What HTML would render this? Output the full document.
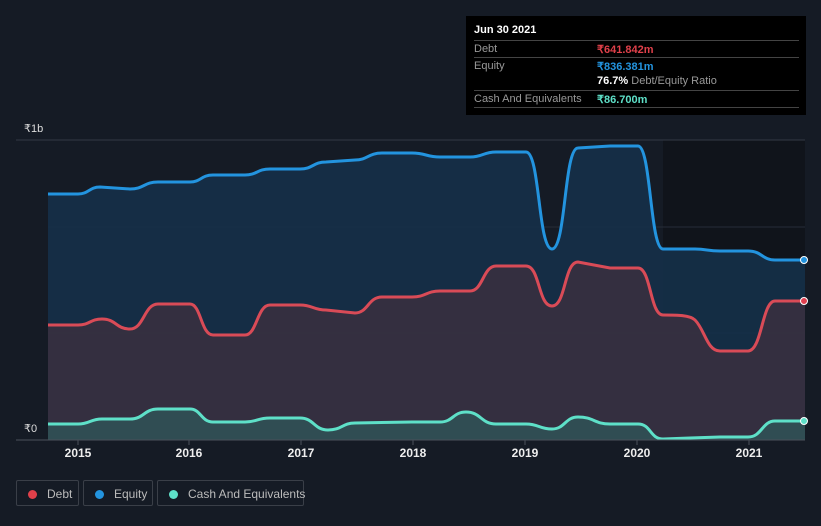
<!DOCTYPE html>
<html><head><style>
body{margin:0;width:821px;height:526px;background:#151b25;font-family:"Liberation Sans",sans-serif;overflow:hidden;position:relative}
.tt{position:absolute;left:466px;top:16px;width:340px;height:99px;background:#000;color:#fff;font-size:11px}
.tt .r{position:absolute;left:8px;right:7px;border-top:1px solid #444;height:16px}
.l{color:#999;position:absolute;left:0;top:2px}
.v{position:absolute;left:123px;top:2px;font-weight:bold}
.leg{position:absolute;top:480px;height:26px;border:1px solid #3a3f48;border-radius:2px;color:#bbb;font-size:12px;line-height:26px;box-sizing:border-box;white-space:nowrap}
.leg i{display:inline-block;width:9px;height:9px;border-radius:50%;margin:0 10px 0 11px;vertical-align:-1px}
.yr{position:absolute;top:446px;color:#eee;font-size:12px;font-weight:bold;width:40px;text-align:center}
</style></head><body>
<svg width="821" height="526" style="position:absolute;left:0;top:0">
<rect x="663" y="140" width="142" height="300" fill="#10141b"/>
<line x1="16" y1="140" x2="805" y2="140" stroke="#333a45"/>
<line x1="48" y1="227" x2="805" y2="227" stroke="#262d38"/>
<line x1="48" y1="333" x2="805" y2="333" stroke="#262d38"/>
<defs>
<path id="eq" d="M48,194 L78,194 C89,194 89,187 100,187 L130,189 C144,189 144,182 158,182 L190,182 C201,182 201,175 213,175 L245,175 C257,175 257,169 270,169 L300,169 C313,169 313,162 326,162 L355,160 C368,160 368,153 382,153 L412,153 C426,153 426,157 440,157 L470,157 C483,157 483,152 496,152 L526,152 C540,152 538,249 552,249 C566,249 564,148 578,148 L610,146 L638,146 C651,146 650,249 663,249 L695,249 C707,249 707,251 720,251 L748,251 C762,251 762,260 775,260 L805,260"/>
<path id="db" d="M48,325 L78,325 C90,325 90,319 102,319 C116,319 116,329 130,329 C144,329 144,304 158,304 L190,304 C201,304 201,335 213,335 L245,335 C257,335 257,305 270,305 L300,305 C313,305 313,310 326,310 L355,313 C368,313 368,297 382,297 L412,297 C426,297 426,291 440,291 L470,291 C483,291 483,266 496,266 L526,266 C540,266 538,306 552,306 C566,306 564,262 578,262 L610,268 L638,268 C651,268 650,315 663,315 C677,315 690,315 695,320 C705,330 707,351 720,351 L748,351 C762,351 762,301 775,301 L805,301"/>
<path id="cs" d="M48,424 L78,424 C90,424 90,419 102,419 L130,419 C144,419 144,409 158,409 L190,409 C201,409 201,422 213,422 L245,422 C257,422 257,418 270,418 L300,418 C314,418 314,430 328,430 C342,430 342,423 355,423 L412,422 L440,422 C453,422 453,412 466,412 C481,412 481,424 496,424 L526,424 C539,424 539,429 552,429 C565,429 565,417 578,417 C594,417 594,424 610,424 L638,424 C651,424 650,439 663,439 L690,438 L720,437 L748,437 C762,437 762,421 775,421 L805,421"/>
</defs>
<path d="M48,194 L78,194 C89,194 89,187 100,187 L130,189 C144,189 144,182 158,182 L190,182 C201,182 201,175 213,175 L245,175 C257,175 257,169 270,169 L300,169 C313,169 313,162 326,162 L355,160 C368,160 368,153 382,153 L412,153 C426,153 426,157 440,157 L470,157 C483,157 483,152 496,152 L526,152 C540,152 538,249 552,249 C566,249 564,148 578,148 L610,146 L638,146 C651,146 650,249 663,249 L695,249 C707,249 707,251 720,251 L748,251 C762,251 762,260 775,260 L805,260 L805,440 L48,440Z" fill="#153049" fill-opacity=".9"/>
<path d="M48,325 L78,325 C90,325 90,319 102,319 C116,319 116,329 130,329 C144,329 144,304 158,304 L190,304 C201,304 201,335 213,335 L245,335 C257,335 257,305 270,305 L300,305 C313,305 313,310 326,310 L355,313 C368,313 368,297 382,297 L412,297 C426,297 426,291 440,291 L470,291 C483,291 483,266 496,266 L526,266 C540,266 538,306 552,306 C566,306 564,262 578,262 L610,268 L638,268 C651,268 650,315 663,315 C677,315 690,315 695,320 C705,330 707,351 720,351 L748,351 C762,351 762,301 775,301 L805,301 L805,440 L48,440Z" fill="#3a3040" fill-opacity=".85"/>
<path d="M48,424 L78,424 C90,424 90,419 102,419 L130,419 C144,419 144,409 158,409 L190,409 C201,409 201,422 213,422 L245,422 C257,422 257,418 270,418 L300,418 C314,418 314,430 328,430 C342,430 342,423 355,423 L412,422 L440,422 C453,422 453,412 466,412 C481,412 481,424 496,424 L526,424 C539,424 539,429 552,429 C565,429 565,417 578,417 C594,417 594,424 610,424 L638,424 C651,424 650,439 663,439 L690,438 L720,437 L748,437 C762,437 762,421 775,421 L805,421 L805,440 L48,440Z" fill="#2f5558" fill-opacity=".8"/>
<use href="#eq" fill="none" stroke="#2394df" stroke-width="3"/>
<use href="#db" fill="none" stroke="#d94b57" stroke-width="3"/>
<use href="#cs" fill="none" stroke="#5ee0c8" stroke-width="3"/>
<circle cx="804" cy="260" r="3.5" fill="#2394df" stroke="#fff" stroke-width="1"/>
<circle cx="804" cy="301" r="3.5" fill="#e04050" stroke="#fff" stroke-width="1"/>
<circle cx="804" cy="421" r="3.5" fill="#5ee0c8" stroke="#fff" stroke-width="1"/>
<line x1="16" y1="440" x2="805" y2="440" stroke="#4a505a"/>
<g stroke="#4a505a"><line x1="78" y1="440" x2="78" y2="445"/><line x1="189" y1="440" x2="189" y2="445"/><line x1="301" y1="440" x2="301" y2="445"/><line x1="413" y1="440" x2="413" y2="445"/><line x1="525" y1="440" x2="525" y2="445"/><line x1="637" y1="440" x2="637" y2="445"/><line x1="749" y1="440" x2="749" y2="445"/></g>
<text x="24" y="132" fill="#ddd" font-size="11" font-family="Liberation Sans,sans-serif">₹1b</text>
<text x="24" y="432" fill="#ddd" font-size="11" font-family="Liberation Sans,sans-serif">₹0</text>
</svg>
<div class="yr" style="left:58px">2015</div><div class="yr" style="left:169px">2016</div><div class="yr" style="left:281px">2017</div><div class="yr" style="left:393px">2018</div><div class="yr" style="left:505px">2019</div><div class="yr" style="left:617px">2020</div><div class="yr" style="left:729px">2021</div>
<div class="tt">
<div style="position:absolute;left:8px;top:8px;font-weight:bold">Jun 30 2021</div>
<div class="r" style="top:24px"><span class="l">Debt</span><span class="v" style="color:#e0404a">₹641.842m</span></div>
<div class="r" style="top:41px"><span class="l">Equity</span><span class="v" style="color:#2394df">₹836.381m</span></div>
<div style="position:absolute;left:131px;top:59px"><b>76.7%</b> <span style="color:#999">Debt/Equity Ratio</span></div>
<div class="r" style="top:74px"><span class="l">Cash And Equivalents</span><span class="v" style="color:#5ee0c8">₹86.700m</span></div>
<div class="r" style="top:91px;height:0"></div>
</div>
<div class="leg" style="left:16px;width:63px"><i style="background:#e0404a"></i>Debt</div>
<div class="leg" style="left:83px;width:70px"><i style="background:#2394df"></i>Equity</div>
<div class="leg" style="left:157px;width:147px"><i style="background:#5ee0c8"></i>Cash And Equivalents</div>
</body></html>
